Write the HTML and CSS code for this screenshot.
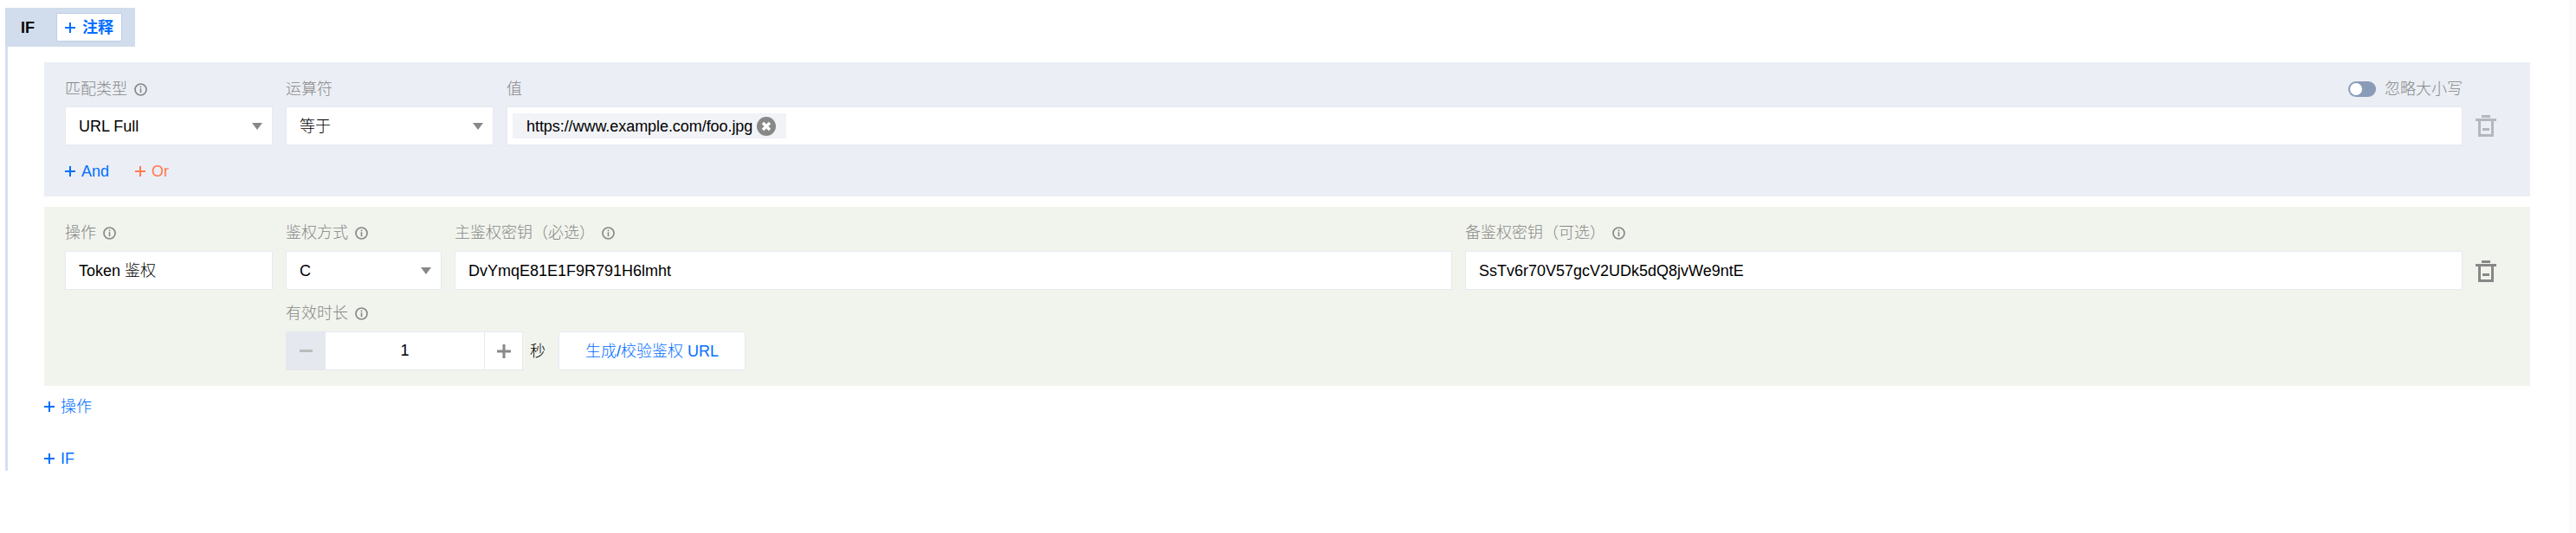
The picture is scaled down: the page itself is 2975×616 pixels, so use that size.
FILE: index.html
```html
<!DOCTYPE html>
<html lang="zh-CN">
<head>
<meta charset="utf-8">
<title>Rule</title>
<link rel="stylesheet" href="styles.css">
</head>
<body>
<svg class="defs" width="0" height="0" aria-hidden="true">
  <defs>
    <symbol id="plus" viewBox="0 0 12 12"><path d="M6 0v12M0 6h12" fill="none" stroke="currentColor" stroke-width="2"/></symbol>
    <symbol id="info" viewBox="0 0 15 15"><circle cx="7.5" cy="7.5" r="6.5" fill="none" stroke="currentColor" stroke-width="1.7"/><path d="M6.7 3.6h1.6v1.6H6.7zM6.7 6.2h1.6v5H6.7z" fill="currentColor"/></symbol>
    <symbol id="trash" viewBox="0 0 24 25"><path d="M7 0h10v3H7zM0 4h24v3H0zM3 7h3v15h12V7h3v18H3zM8 15h8v3H8z" fill="currentColor"/></symbol>
  </defs>
</svg>
<div class="page">
  <main class="main">
    <div class="rule-head">
      <span class="if-title">IF</span>
      <button class="note-btn"><svg class="plus"><use href="#plus"/></svg><span>注释</span></button>
    </div>
    <div class="rule-body">
      <section class="panel panel-match">
        <div class="grid grid-match">
          <div class="field">
            <div class="label">匹配类型<svg class="info"><use href="#info"/></svg></div>
            <div class="control select"><span>URL Full</span><i class="caret"></i></div>
          </div>
          <div class="field">
            <div class="label">运算符</div>
            <div class="control select"><span>等于</span><i class="caret"></i></div>
          </div>
          <div class="field">
            <div class="label label-split">
              <span>值</span>
              <span class="case"><i class="toggle"><b></b></i>忽略大小写</span>
            </div>
            <div class="control control-tags">
              <span class="tag"><span class="tag-text">https://www.example.com/foo.jpg</span><svg class="tag-x" viewBox="0 0 22 22"><circle cx="11" cy="11" r="11" fill="#888"/><path d="M7 7l8 8M15 7l-8 8" stroke="#fff" stroke-width="3.4" fill="none"/></svg></span>
            </div>
          </div>
          <svg class="trash trash-off"><use href="#trash"/></svg>
        </div>
        <div class="adders">
          <a class="add add-blue"><svg class="plus"><use href="#plus"/></svg>And</a>
          <a class="add add-orange"><svg class="plus"><use href="#plus"/></svg>Or</a>
        </div>
      </section>

      <section class="panel panel-action">
        <div class="grid grid-action">
          <div class="field">
            <div class="label">操作<svg class="info"><use href="#info"/></svg></div>
            <div class="control"><span>Token 鉴权</span></div>
          </div>
          <div class="field">
            <div class="label">鉴权方式<svg class="info"><use href="#info"/></svg></div>
            <div class="control select"><span>C</span><i class="caret"></i></div>
          </div>
          <div class="field">
            <div class="label">主鉴权密钥（必选）<svg class="info"><use href="#info"/></svg></div>
            <div class="control"><span>DvYmqE81E1F9R791H6lmht</span></div>
          </div>
          <div class="field">
            <div class="label">备鉴权密钥（可选）<svg class="info"><use href="#info"/></svg></div>
            <div class="control"><span>SsTv6r70V57gcV2UDk5dQ8jvWe9ntE</span></div>
          </div>
          <svg class="trash"><use href="#trash"/></svg>
          <div class="field field-ttl">
            <div class="label">有效时长<svg class="info"><use href="#info"/></svg></div>
            <div class="ttl-row">
              <div class="stepper">
                <span class="step step-minus"><i></i></span>
                <span class="step-value">1</span>
                <span class="step step-plus"><svg viewBox="0 0 16 16"><path d="M8 0v16M0 8h16" stroke="currentColor" stroke-width="3" fill="none"/></svg></span>
              </div>
              <span class="unit">秒</span>
              <button class="url-btn">生成/校验鉴权 URL</button>
            </div>
          </div>
        </div>
      </section>

      <a class="add add-blue add-op"><svg class="plus"><use href="#plus"/></svg>操作</a>
      <a class="add add-blue add-if"><svg class="plus"><use href="#plus"/></svg>IF</a>
    </div>
  </main>
  <div class="scroll-track"></div>
</div>
</body>
</html>
```
FILE: styles.css
```css
* { box-sizing: border-box; }
html, body { margin: 0; padding: 0; background: #fff; }
body {
  font-family: "Liberation Sans", "Noto Sans CJK SC", sans-serif;
  font-size: 18px;
  font-weight: 300;
  line-height: 24px;
  color: #000;
  overflow: hidden;
}
.defs { position: absolute; }
.page { display: flex; height: 616px; }
.main { flex: 1; padding: 9px 0 0 6px; min-width: 0; }
.scroll-track { width: 8px; background: #fafafa; }

.rule-head {
  display: flex;
  align-items: center;
  width: 150px;
  height: 45px;
  padding-left: 18px;
  background: #d1dcec;
}
.if-title { font-weight: 700; width: 41px; }
.note-btn {
  display: flex;
  align-items: center;
  width: 76px;
  height: 33px;
  padding: 0 0 0 9px;
  border: 1px solid #bfcfe6;
  background: #fff;
  color: #006eff;
  font: 700 18px/24px "Liberation Sans", "Noto Sans CJK SC", sans-serif;
}
.plus { width: 12px; height: 12px; margin-right: 7px; flex: none; }
.note-btn .plus { margin-right: 8px; }

.rule-body {
  height: 490px;
  padding: 18px 45px 0 42px;
  border-left: 3px solid #d4dff2;
}
.panel { padding: 19px 39px 17px 24px; }
.panel-match { background: #ebeef5; }
.panel-action { margin-top: 12px; padding-top: 18px; padding-bottom: 18px; background: #f1f4ed; }

.grid { display: grid; column-gap: 15px; row-gap: 15px; }
.grid-match { grid-template-columns: 240px 240px 1fr 24px; }
.grid-action { grid-template-columns: 240px 180px 1fr 1fr 24px; }
.field { min-width: 0; }
.field-ttl { grid-column: 2 / 6; }

.label {
  display: flex;
  align-items: center;
  height: 24px;
  margin-bottom: 9px;
  color: #888;
}
.panel-match .label { margin-bottom: 8px; }
.label-split { justify-content: space-between; }
.info { width: 15px; height: 15px; margin-left: 8px; color: #888; }

.control {
  display: flex;
  align-items: center;
  height: 45px;
  padding: 0 15px;
  background: #fff;
  border: 1px solid #e6e9ef;
}
.select { justify-content: space-between; padding-right: 11px; }
.caret {
  width: 0;
  height: 0;
  border-left: 6px solid transparent;
  border-right: 6px solid transparent;
  border-top: 8px solid #888;
}
.control-tags { padding: 0 6px; }
.tag {
  display: flex;
  align-items: center;
  height: 29px;
  padding: 0 12px 0 16px;
  background: #f2f3f7;
}
.tag-text { letter-spacing: -0.06px; }
.tag-x { width: 22px; height: 22px; margin-left: 5px; }

.case { display: flex; align-items: center; }
.toggle {
  display: block;
  width: 32px;
  height: 18px;
  margin-right: 10px;
  padding: 2px;
  border-radius: 9px;
  background: #8a9bb7;
}
.toggle b {
  display: block;
  width: 14px;
  height: 14px;
  border-radius: 50%;
  background: #fff;
}

.trash { width: 24px; height: 25px; margin-top: 44px; color: #888; }
.trash-off { margin-top: 42px; color: #b4b8be; }

.adders { display: flex; margin-top: 18px; }
.add { display: flex; align-items: center; height: 24px; }
.add-blue { color: #006eff; }
.add-orange { margin-left: 30px; color: #ff7c50; }
.add-op { margin-top: 12px; }
.add-if { margin-top: 36px; }

.ttl-row { display: flex; align-items: center; }
.stepper { display: flex; width: 274px; height: 45px; }
.step {
  display: flex;
  align-items: center;
  justify-content: center;
  width: 46px;
  flex: none;
}
.step-minus { background: #e5e8ee; }
.step-minus i { display: block; width: 15px; height: 3px; background: #bbb; }
.step-plus {
  width: 45px;
  background: #fff;
  border: 1px solid #e6e9ef;
  color: #888;
}
.step-plus svg { width: 16px; height: 16px; }
.step-value {
  flex: 1;
  text-align: center;
  line-height: 43px;
  background: #fff;
  border-top: 1px solid #e6e9ef;
  border-bottom: 1px solid #e6e9ef;
}
.unit { margin-left: 8px; }
.url-btn {
  width: 216px;
  height: 45px;
  margin-left: 15px;
  padding: 0;
  background: #fff;
  border: 1px solid #e6e9ef;
  color: #006eff;
  font: 300 18px/24px "Liberation Sans", "Noto Sans CJK SC", sans-serif;
}
```
